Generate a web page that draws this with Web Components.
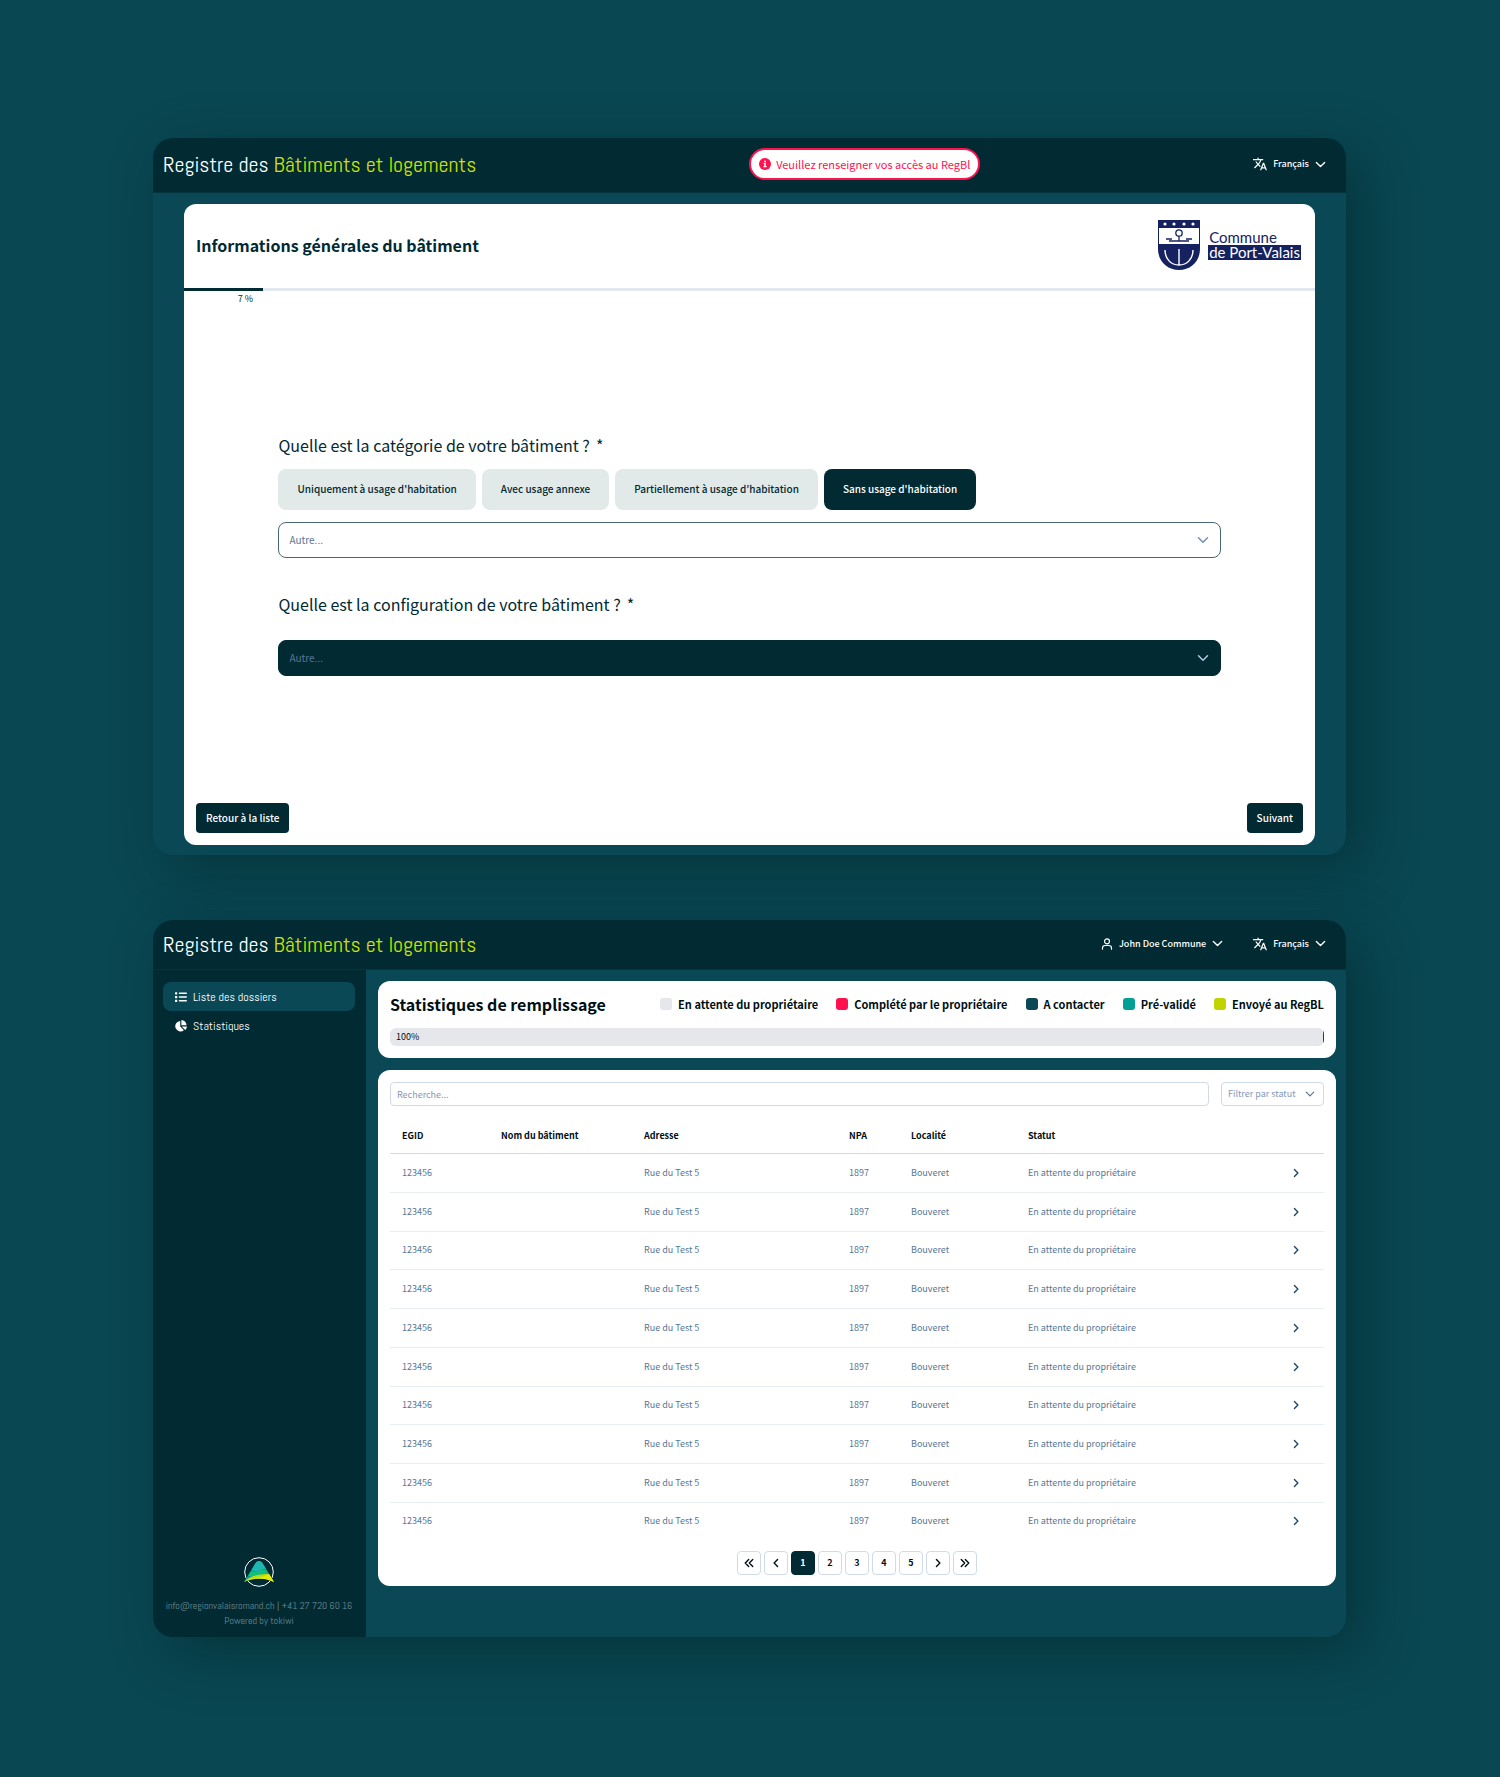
<!DOCTYPE html>
<html lang="fr">
<head>
<meta charset="utf-8">
<title>Registre des Bâtiments et logements</title>
<style>
  :root {
    --dark: #012a33;
    --petrol: #0a4855;
    --lime: #c1d400;
    --red: #ff1150;
    --teal: #029f94;
    --muted: #587796;
    --line: #cfdbe8;
    --title-font: "Abel", "Liberation Sans Narrow", "Noto Sans CJK KR", sans-serif;
  }
  body {
    margin: 0;
    padding: 138px 10.27% 140px 10.2%;
    background: #094753;
    color: var(--dark);
    font: 10px/16px "Noto Sans CJK KR", sans-serif;
  }
  app-window + app-window { margin-top: 65px; }
</style>
</head>
<body>

<app-window>
  <app-header slot="header" roomy>
    <alert-pill>Veuillez renseigner vos accès au RegBl</alert-pill>
    <menu-button slot="menu" icon="translate">Français</menu-button>
  </app-header>
  <building-form></building-form>
</app-window>

<app-window>
  <app-header slot="header">
    <menu-button slot="menu" icon="user">John Doe Commune</menu-button>
    <menu-button slot="menu" icon="translate">Français</menu-button>
  </app-header>
  <side-bar slot="side"></side-bar>
  <dossier-board>
    <fill-stats></fill-stats>
    <dossier-table></dossier-table>
  </dossier-board>
</app-window>

<script>
const ICONS = {
  translate: ['1 1 22 22', '<path fill="currentColor" d="M12.87 15.07l-2.54-2.51.03-.03c1.74-1.94 2.98-4.17 3.71-6.53H17V4h-7V2H8v2H1v1.99h11.17C11.5 7.92 10.44 9.75 9 11.35 8.07 10.32 7.3 9.19 6.69 8h-2c.73 1.63 1.73 3.17 2.98 4.56l-5.09 5.02L4 19l5-5 3.11 3.11.76-2.04zM18.5 10h-2L12 22h2l1.12-3h4.75L21 22h2l-4.5-12zm-2.62 7l1.62-4.33L19.12 17h-3.24z"/>'],
  user: ['0 0 16 16', '<g fill="none" stroke="currentColor" stroke-width="1.6" stroke-linecap="round"><circle cx="8" cy="4.4" r="3.3"/><path d="M2 15v-1.600a3.400 3.400 0 0 1 3.400-3.400h5.200a3.400 3.400 0 0 1 3.400 3.400V15"/></g>'],
  down: ['0 0 16 16', '<path d="M2 5l6 6 6-6" fill="none" stroke="currentColor" stroke-width="2" stroke-linecap="round" stroke-linejoin="round"/>'],
  right: ['0 0 16 16', '<path d="M5.5 2.5L11 8l-5.5 5.5" fill="none" stroke="currentColor" stroke-width="2.2" stroke-linecap="round" stroke-linejoin="round"/>'],
  left: ['0 0 16 16', '<path d="M10.5 2.5L5 8l5.5 5.5" fill="none" stroke="currentColor" stroke-width="2.2" stroke-linecap="round" stroke-linejoin="round"/>'],
  first: ['0 0 16 16', '<path d="M7.5 2.5L2 8l5.5 5.5M14 2.5L8.5 8l5.5 5.5" fill="none" stroke="currentColor" stroke-width="2.2" stroke-linecap="round" stroke-linejoin="round"/>'],
  last: ['0 0 16 16', '<path d="M8.5 2.5L14 8l-5.5 5.5M2 2.5L7.5 8 2 13.5" fill="none" stroke="currentColor" stroke-width="2.2" stroke-linecap="round" stroke-linejoin="round"/>'],
  info: ['0 0 16 16', '<circle cx="8" cy="8" r="8" fill="currentColor"/><g fill="#fff"><circle cx="8" cy="4.6" r="1.3"/><path d="M6.2 6.8h2.900v4h1v1.600H6v-1.600h1.100V8.400h-.9z"/></g>'],
  list: ['0 0 16 16', '<g fill="currentColor"><rect x="0" y="1.5" width="3" height="3" rx=".6"/><rect x="0" y="6.5" width="3" height="3" rx=".6"/><rect x="0" y="11.5" width="3" height="3" rx=".6"/><rect x="5" y="2" width="11" height="2" rx="1"/><rect x="5" y="7" width="11" height="2" rx="1"/><rect x="5" y="12" width="11" height="2" rx="1"/></g>'],
  pie: ['0 0 16 16', '<g fill="currentColor"><path d="M7 1.300v7.500l4.800 4.900A7 7 0 1 1 7 1.300z"/><path d="M8.500 0A6.800 6.800 0 0 1 15.300 7H8.500z"/><path d="M9 8.500h7a7.200 7.200 0 0 1-2.400 4.700z"/></g>']
};

class UiIcon extends HTMLElement {
  connectedCallback() {
    const [box, shape] = ICONS[this.getAttribute('name')];
    this.attachShadow({ mode: 'open' });
    this.shadowRoot.innerHTML = `
      <style>
        :host { display: block; flex: none; width: 12px; height: 12px; }
        svg { display: block; width: 100%; height: 100%; }
      </style>
      <svg viewBox="${box}" aria-hidden="true">${shape}</svg>
    `;
  }
}

class AppWindow extends HTMLElement {
  connectedCallback() {
    this.attachShadow({ mode: 'open' });
    this.shadowRoot.innerHTML = `
      <style>
        :host {
          display: flex;
          flex-direction: column;
          min-height: 717px;
          border-radius: 20px;
          overflow: hidden;
          background: var(--petrol);
          box-shadow: 16px 16px 56px rgba(0, 30, 32, 0.45);
        }
        .body { display: flex; flex: 1; }
        .main { flex: 1; min-width: 0; display: grid; }
      </style>
      <slot name="header"></slot>
      <div class="body">
        <slot name="side"></slot>
        <div class="main"><slot></slot></div>
      </div>
    `;
  }
}

class AppHeader extends HTMLElement {
  connectedCallback() {
    this.attachShadow({ mode: 'open' });
    this.shadowRoot.innerHTML = `
      <style>
        :host { display: block; background: var(--dark); border-bottom: 1px solid #06343e; }
        header {
          display: flex;
          align-items: center;
          justify-content: space-between;
          box-sizing: border-box;
          height: 49px;
          padding: 0 20px 2px 10px;
        }
        :host([roomy]) header { height: 54px; }
        h1 {
          margin: 0;
          font: 400 22px/28px var(--title-font);
          color: #fff;
        }
        h1 span { color: #d0e200; }
        nav { display: flex; gap: 30px; }
      </style>
      <header>
        <h1>Registre des <span>Bâtiments et logements</span></h1>
        <slot></slot>
        <nav><slot name="menu"></slot></nav>
      </header>
    `;
  }
}

class AlertPill extends HTMLElement {
  connectedCallback() {
    this.attachShadow({ mode: 'open' });
    this.shadowRoot.innerHTML = `
      <style>
        :host {
          display: flex;
          align-items: center;
          gap: 5px;
          height: 28px;
          padding: 0 8px;
          border: 2px solid var(--red);
          border-radius: 16px;
          background: #fff;
          color: var(--red);
          font-size: 11px;
        }
      </style>
      <ui-icon name="info"></ui-icon>
      <span><slot></slot></span>
    `;
  }
}

class MenuButton extends HTMLElement {
  connectedCallback() {
    this.attachShadow({ mode: 'open' });
    this.shadowRoot.innerHTML = `
      <style>
        :host { display: block; }
        button {
          display: flex;
          align-items: center;
          gap: 6px;
          padding: 0;
          border: 0;
          background: none;
          color: #fff;
          font: inherit;
          font-size: 9px;
          font-weight: 500;
          cursor: pointer;
        }
        ui-icon[name="translate"] { width: 14px; height: 14px; }
        ui-icon[name="down"] { width: 11px; height: 11px; }
      </style>
      <button type="button" aria-haspopup="menu">
        <ui-icon name="${this.getAttribute('icon')}"></ui-icon>
        <slot></slot>
        <ui-icon name="down"></ui-icon>
      </button>
    `;
  }
}

class CommuneLogo extends HTMLElement {
  connectedCallback() {
    this.attachShadow({ mode: 'open' });
    this.shadowRoot.innerHTML = `
      <style>
        :host {
          display: flex;
          align-items: center;
          gap: 8px;
          color: #16225f;
          font: 15px/15px Lato, sans-serif;
        }
        svg { display: block; width: 42px; height: 50px; }
        span { display: block; padding: 0 1px; }
        .mark { background: #16225f; color: #fff; }
      </style>
      <svg viewBox="0 0 42 50" aria-hidden="true">
        <path d="M0 0h42v29c0 12-9 21-21 21S0 41 0 29z" fill="#16225f"/>
        <path d="M1 8h40v16H1z" fill="#fff"/>
        <g fill="#fff">
          <circle cx="7" cy="4" r="1.6"/><circle cx="16" cy="4" r="1.6"/>
          <circle cx="26" cy="4" r="1.6"/><circle cx="35" cy="4" r="1.6"/>
        </g>
        <g fill="none" stroke="#16225f" stroke-width="1.3">
          <circle cx="21" cy="13" r="3.2"/>
          <path d="M21 16v5M8 19h6M28 19h6M11 21h20"/>
        </g>
        <g fill="none" stroke="#fff" stroke-width="1.4">
          <path d="M21 29v16"/>
          <path d="M7 30c0 9 6 15 14 15s14-6 14-15"/>
        </g>
      </svg>
      <div><span>Commune</span><span class="mark">de Port-Valais</span></div>
    `;
  }
}

class BuildingForm extends HTMLElement {
  connectedCallback() {
    const choices = ["Uniquement à usage d'habitation", 'Avec usage annexe', 'Partiellement à usage d’habitation', "Sans usage d'habitation"];
    this.attachShadow({ mode: 'open' });
    this.shadowRoot.innerHTML = `
      <style>
        :host { display: grid; padding: 11px 31px 10px; }
        .card {
          display: flex;
          flex-direction: column;
          background: #fff;
          border-radius: 12px;
        }
        .top {
          display: flex;
          align-items: center;
          justify-content: space-between;
          box-sizing: border-box;
          height: 84px;
          padding: 0 14px 2px 12px;
        }
        h2 { margin: 0; font-size: 16px; line-height: 24px; font-weight: 700; }
        .track { height: 3px; background: #e2e8f0; }
        .fill { width: 7%; height: 3px; background: var(--dark); }
        .percent {
          width: 7%;
          box-sizing: border-box;
          padding-right: 10px;
          text-align: right;
          font-size: 9px;
          line-height: 16px;
        }
        form { flex: 1; display: flex; flex-direction: column; }
        .fields {
          flex: 1;
          display: flex;
          flex-direction: column;
          justify-content: center;
          width: 83.3%;
          margin: 0 auto;
          padding-top: 10px;
        }
        .question { display: flex; gap: 6px; font-size: 16px; line-height: 24px; }
        .choices { display: flex; gap: 6px; margin: 12px 0; }
        .choices button {
          height: 41px;
          padding: 0 19px;
          border: 0;
          border-radius: 8px;
          background: #e2e9e9;
          color: var(--dark);
          font: inherit;
          font-weight: 500;
          font-feature-settings: "palt";
        }
        .choices button[aria-pressed="true"] { background: var(--dark); color: #fff; }
        .select { display: grid; align-items: center; color: var(--muted); }
        .select > * { grid-area: 1 / 1; }
        .select select {
          appearance: none;
          width: 100%;
          height: 36px;
          padding: 0 10px;
          border: 1px solid #47686f;
          border-radius: 8px;
          background: #fff;
          color: inherit;
          font: inherit;
        }
        .select ui-icon { justify-self: end; margin-right: 12px; color: #6f8fb3; pointer-events: none; }
        .second { margin: 34px 0 24px; }
        .dark select { background: var(--dark); border-color: var(--dark); }
        .dark ui-icon { color: #b4c8e0; }
        .actions { display: flex; justify-content: space-between; padding: 12px; }
        .actions button {
          height: 30px;
          padding: 0 10px;
          border: 0;
          border-radius: 4px;
          background: var(--dark);
          color: #fff;
          font: inherit;
          font-weight: 500;
        }
      </style>
      <section class="card">
        <div class="top">
          <h2>Informations générales du bâtiment</h2>
          <commune-logo></commune-logo>
        </div>
        <div class="track"><div class="fill"></div></div>
        <div class="percent">7 %</div>
        <form>
          <div class="fields">
            <label class="question" for="category"><span>Quelle est la catégorie de votre bâtiment ?</span><span>*</span></label>
            <div class="choices">
              ${choices.map((c, i) => `<button type="button" aria-pressed="${i === 3}">${c}</button>`).join('')}
            </div>
            <div class="select">
              <select id="category"><option>Autre...</option></select>
              <ui-icon name="down"></ui-icon>
            </div>
            <label class="question second" for="config"><span>Quelle est la configuration de votre bâtiment ?</span><span>*</span></label>
            <div class="select dark">
              <select id="config"><option>Autre...</option></select>
              <ui-icon name="down"></ui-icon>
            </div>
          </div>
          <div class="actions">
            <button type="button">Retour à la liste</button>
            <button type="button">Suivant</button>
          </div>
        </form>
      </section>
    `;
  }
}

class SideBar extends HTMLElement {
  connectedCallback() {
    this.attachShadow({ mode: 'open' });
    this.shadowRoot.innerHTML = `
      <style>
        :host {
          display: flex;
          flex-direction: column;
          justify-content: space-between;
          box-sizing: border-box;
          width: 213px;
          padding: 12px 11px 9px 10px;
          background: var(--dark);
          font-family: var(--title-font);
        }
        a {
          display: flex;
          align-items: center;
          gap: 6px;
          height: 29px;
          padding: 0 12px;
          border-radius: 8px;
          color: #fff;
          font-size: 12px;
          text-decoration: none;
        }
        a[aria-current] { background: var(--petrol); }
        footer { color: #6b8a90; text-align: center; line-height: 15px; white-space: nowrap; }
        svg { display: block; width: 32px; height: 32px; margin: 0 auto 10px; }
      </style>
      <nav>
        <a href="#dossiers" aria-current="page"><ui-icon name="list"></ui-icon>Liste des dossiers</a>
        <a href="#stats"><ui-icon name="pie"></ui-icon>Statistiques</a>
      </nav>
      <footer>
        <svg viewBox="0 0 32 32" aria-hidden="true">
          <circle cx="16" cy="16" r="14.3" fill="none" stroke="#fff" stroke-width="1"/>
          <path d="M1 26L12 8c2-4 6-4 8 0l11 18c-10-5-20-4-30 0z" fill="#04a08f"/>
          <path d="M8.5 14L12 8c2-4 6-4 8 0l3 5c-5-2-7 5-14.500 1z" fill="#1fb7b4"/>
          <path d="M8 15c5 3 9-2 15-1l3 4c-8-1-12 3-21 2z" fill="#12bf7c"/>
          <path d="M1 26c6-6 14-8 25-8l5 8c-10-5-20-4-30 0z" fill="#b5dc13"/>
          <path d="M7 23c7-2 12-1 19-5l5 8c-8-4-16-4-24-3z" fill="#e3ea08"/>
        </svg>
        <div>info@regionvalaisromand.ch | +41 27 720 60 16</div>
        <div>Powered by tokiwi</div>
      </footer>
    `;
  }
}

class DossierBoard extends HTMLElement {
  connectedCallback() {
    this.attachShadow({ mode: 'open' });
    this.shadowRoot.innerHTML = `
      <style>
        :host {
          display: flex;
          flex-direction: column;
          gap: 12px;
          padding: 11px 10px 11px 12px;
        }
      </style>
      <slot></slot>
    `;
  }
}

class FillStats extends HTMLElement {
  connectedCallback() {
    const legend = [
      ['En attente du propriétaire', '#e5e7eb'],
      ['Complété par le propriétaire', 'var(--red)'],
      ['A contacter', 'var(--petrol)'],
      ['Pré-validé', 'var(--teal)'],
      ['Envoyé au RegBL', 'var(--lime)']
    ];
    this.attachShadow({ mode: 'open' });
    this.shadowRoot.innerHTML = `
      <style>
        :host {
          display: block;
          padding: 11px 12px 12px;
          background: #fff;
          border-radius: 12px;
          color: #000f14;
        }
        .head { display: flex; align-items: center; justify-content: space-between; }
        h2 { margin: 0; font-size: 16px; line-height: 24px; font-weight: 700; }
        ul { display: flex; gap: 18px; margin: 0; padding: 0; list-style: none; font-size: 11px; font-weight: 700; }
        li { display: flex; align-items: center; gap: 6px; }
        i { width: 12px; height: 12px; border-radius: 3px; }
        .bar {
          display: flex;
          justify-content: space-between;
          margin-top: 12px;
          border-radius: 6px;
          overflow: hidden;
          background: #e5e7eb;
          font-size: 9px;
          line-height: 18px;
        }
        .bar span { padding-left: 6px; }
        .bar b { width: 1px; background: var(--petrol); }
      </style>
      <div class="head">
        <h2>Statistiques de remplissage</h2>
        <ul>${legend.map(([name, color]) => `<li><i style="background:${color}"></i>${name}</li>`).join('')}</ul>
      </div>
      <div class="bar"><span>100%</span><b></b></div>
    `;
  }
}

class DossierTable extends HTMLElement {
  connectedCallback() {
    const row = `
      <tr>
        <td>123456</td><td></td><td>Rue du Test 5</td><td>1897</td>
        <td>Bouveret</td><td>En attente du propriétaire</td>
        <td class="go"><ui-icon name="right"></ui-icon></td>
      </tr>`;
    this.attachShadow({ mode: 'open' });
    this.shadowRoot.innerHTML = `
      <style>
        :host {
          display: block;
          padding: 12px 12px 11px;
          background: #fff;
          border-radius: 12px;
          font-size: 9px;
        }
        .tools { display: flex; gap: 12px; }
        input, select {
          box-sizing: border-box;
          height: 24px;
          padding: 0 6px;
          border: 1px solid var(--line);
          border-radius: 4px;
          background: #fff;
          color: #8499b8;
          font: inherit;
        }
        input { flex: 1; min-width: 0; }
        input::placeholder { color: #8499b8; }
        .filter { display: grid; align-items: center; color: var(--muted); }
        .filter > * { grid-area: 1 / 1; }
        .filter select { appearance: none; padding-right: 27px; }
        .filter ui-icon { justify-self: end; width: 10px; height: 10px; margin-right: 9px; pointer-events: none; }
        table {
          width: 100%;
          height: 424px;
          margin-top: 10px;
          border-collapse: collapse;
          table-layout: fixed;
          color: var(--muted);
        }
        th, td { padding: 0 12px; text-align: left; border-bottom: 1px solid #e8edf3; }
        th { height: 35px; padding-top: 2px; color: #000f14; font-weight: 700; border-color: var(--line); }
        tbody tr:last-child td { border: 0; }
        .go ui-icon { width: 10px; height: 10px; margin-left: 11px; color: #1d4668; }
        .pages { display: flex; justify-content: center; gap: 3px; margin-top: 11px; }
        .pages button {
          display: grid;
          place-items: center;
          width: 24px;
          height: 24px;
          padding: 0;
          border: 1px solid var(--line);
          border-radius: 4px;
          background: #fff;
          color: #000f14;
          font: inherit;
          font-weight: 700;
        }
        .pages ui-icon { width: 10px; height: 10px; }
        .pages button[aria-current] { background: var(--dark); border-color: var(--dark); color: #fff; }
      </style>
      <div class="tools">
        <input type="search" placeholder="Recherche..." aria-label="Recherche">
        <div class="filter">
          <select aria-label="Filtrer par statut"><option>Filtrer par statut</option></select>
          <ui-icon name="down"></ui-icon>
        </div>
      </div>
      <table>
        <colgroup>
          <col style="width:99px"><col style="width:143px"><col style="width:205px">
          <col style="width:62px"><col style="width:117px"><col><col style="width:56px">
        </colgroup>
        <thead>
          <tr><th>EGID</th><th>Nom du bâtiment</th><th>Adresse</th><th>NPA</th><th>Localité</th><th>Statut</th><th></th></tr>
        </thead>
        <tbody>${row.repeat(10)}</tbody>
      </table>
      <div class="pages">
        <button type="button" aria-label="Première page"><ui-icon name="first"></ui-icon></button>
        <button type="button" aria-label="Page précédente"><ui-icon name="left"></ui-icon></button>
        <button type="button" aria-current="page">1</button>
        <button type="button">2</button>
        <button type="button">3</button>
        <button type="button">4</button>
        <button type="button">5</button>
        <button type="button" aria-label="Page suivante"><ui-icon name="right"></ui-icon></button>
        <button type="button" aria-label="Dernière page"><ui-icon name="last"></ui-icon></button>
      </div>
    `;
  }
}

customElements.define('ui-icon', UiIcon);
customElements.define('app-window', AppWindow);
customElements.define('app-header', AppHeader);
customElements.define('alert-pill', AlertPill);
customElements.define('menu-button', MenuButton);
customElements.define('commune-logo', CommuneLogo);
customElements.define('building-form', BuildingForm);
customElements.define('side-bar', SideBar);
customElements.define('dossier-board', DossierBoard);
customElements.define('fill-stats', FillStats);
customElements.define('dossier-table', DossierTable);
</script>
</body>
</html>
